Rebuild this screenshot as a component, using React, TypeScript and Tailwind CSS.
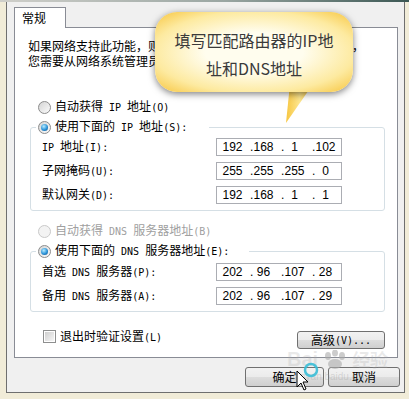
import React from "react";

function Mix({ s }: { s: string }) {
  const parts = s.split(/([\x20-\x7e]+)/).filter((p) => p.length > 0);
  return (
    <>
      {parts.map((p, i) =>
        /^[\x20-\x7e]+$/.test(p) ? (
          <span key={i} className="whitespace-pre font-['DejaVu_Sans_Mono',monospace] text-[10px]">
            {p}
          </span>
        ) : (
          <span key={i}>{p}</span>
        )
      )}
    </>
  );
}

function Radio({ checked = false, disabled = false }: { checked?: boolean; disabled?: boolean }) {
  return (
    <span
      className={`flex h-[13px] w-[13px] shrink-0 items-center justify-center rounded-full border ${
        disabled
          ? "border-[#c9c9c9] bg-[#f3f3f3]"
          : "border-[#8c8c8c] bg-[linear-gradient(135deg,#d4d4d4,#fbfbfb)]"
      }`}
    >
      {checked && (
        <span className="h-[7px] w-[7px] rounded-full bg-[radial-gradient(circle_at_40%_35%,#b8ecff,#2b93d8_55%,#0b477f)]" />
      )}
    </span>
  );
}

function IpField({ v }: { v: string[] }) {
  return (
    <div className="flex h-[18px] w-[126px] items-center overflow-hidden border border-[#abadb3] bg-white font-['Liberation_Sans',sans-serif] text-[12px] text-black">
      {v.map((n, i) => (
        <div key={i} className="relative h-[16px] w-[31px] shrink-0 text-center leading-[16px]">
          {i > 0 && <span className="absolute left-[2px] top-0">.</span>}
          {n}
        </div>
      ))}
    </div>
  );
}

function Row({ label, v }: { label: string; v: string[] }) {
  return (
    <div className="flex h-[18px] items-center">
      <div className="w-[185px] whitespace-nowrap pl-[11px] leading-[14px]">
        <Mix s={label} />
      </div>
      <IpField v={v} />
    </div>
  );
}

function Btn({ children, w }: { children: React.ReactNode; w: string }) {
  return (
    <div
      className={`flex ${w} items-center justify-center rounded-[3px] border border-[#707070] bg-[linear-gradient(#f2f2f2_0%,#ebebeb_50%,#dddddd_51%,#cfcfcf_100%)] text-[12px] text-black`}
    >
      {children}
    </div>
  );
}

export default function App() {
  return (
    <div className="relative h-[399px] w-[409px] overflow-hidden bg-[#f1ecd8] font-['Noto_Sans_CJK_SC',sans-serif] text-[12px] text-black">
      <div className="h-[2px] bg-[linear-gradient(90deg,#cfcfca,#9aa6a2_55%,#3c5854)]" />
      <div className="ml-[6px] h-[391px] w-[399px] border-x border-b border-[#6f6f6f] bg-[#f0f0f0] pl-[7px] pt-[5px]">
        {/* tab */}
        <div className="relative z-10 flex h-[21px] w-[52px] items-center border border-b-0 border-[#898c95] bg-white pl-[7px] leading-[14px]">
          常规
        </div>
        {/* panel */}
        <div className="-mt-px h-[331px] w-[384px] border border-[#898c95] bg-white">
          <div className="pl-[13px] pt-[11px] leading-[13px]">
            <div className="whitespace-nowrap">
              <Mix s="如果网络支持此功能，则可以获取自动指派的 IP 设置。否则，" />
            </div>
            <div className="whitespace-nowrap">
              <Mix s="您需要从网络系统管理员处获得适当的 IP 设置。" />
            </div>
          </div>

          <div className="ml-[23px] mt-[28px] flex h-[20px] items-center gap-[4px] leading-[14px]">
            <Radio />
            <span className="whitespace-nowrap">
              <Mix s="自动获得 IP 地址(O)" />
            </span>
          </div>
          <fieldset className="ml-[15px] w-[355px] rounded-[3px] border border-[#d5dfe5] pb-[6px] pt-[1px]">
            <legend className="ml-[5px] flex h-[20px] items-center gap-[4px] pl-[2px] pr-[22px] leading-[14px]">
              <Radio checked />
              <span className="whitespace-nowrap">
                <Mix s="使用下面的 IP 地址(S):" />
              </span>
            </legend>
            <div className="flex flex-col gap-[6px]">
              <Row label="IP 地址(I):" v={["192", "168", "1", "102"]} />
              <Row label="子网掩码(U):" v={["255", "255", "255", "0"]} />
              <Row label="默认网关(D):" v={["192", "168", "1", "1"]} />
            </div>
          </fieldset>

          <div className="ml-[23px] mt-[10px] flex h-[20px] items-center gap-[4px] leading-[14px] text-[#a0a0a0]">
            <Radio disabled />
            <span className="whitespace-nowrap">
              <Mix s="自动获得 DNS 服务器地址(B)" />
            </span>
          </div>
          <fieldset className="ml-[15px] w-[355px] rounded-[3px] border border-[#d5dfe5] pb-[6px] pt-[2px]">
            <legend className="ml-[5px] flex h-[20px] items-center gap-[4px] pl-[2px] pr-[20px] leading-[14px]">
              <Radio checked />
              <span className="whitespace-nowrap">
                <Mix s="使用下面的 DNS 服务器地址(E):" />
              </span>
            </legend>
            <div className="flex flex-col gap-[6px]">
              <Row label="首选 DNS 服务器(P):" v={["202", "96", "107", "28"]} />
              <Row label="备用 DNS 服务器(A):" v={["202", "96", "107", "29"]} />
            </div>
          </fieldset>

          <div className="ml-[28px] mt-[18px] flex w-[342px] items-start justify-between">
            <div className="flex h-[13px] items-center gap-[4px] leading-[14px]">
              <span className="flex h-[13px] w-[13px] items-center justify-center border border-[#8e8f8f] bg-white">
                <span className="h-[9px] w-[9px] bg-[linear-gradient(135deg,#cfcfcf,#f6f6f6)]" />
              </span>
              <span className="whitespace-nowrap">
                <Mix s="退出时验证设置(L)" />
              </span>
            </div>
            <div className="mt-[1px]">
              <Btn w="h-[18px] w-[88px]">
                <Mix s="高级(V)..." />
              </Btn>
            </div>
          </div>
        </div>

        <div className="ml-[231px] mt-[9px] flex gap-[4px]">
          <Btn w="h-[20px] w-[79px]">确定</Btn>
          <Btn w="h-[20px] w-[72px]">取消</Btn>
        </div>
      </div>

      {/* watermark */}
      <div className="pointer-events-none absolute left-[287px] top-[348px] flex items-end font-['Liberation_Sans',sans-serif] text-[20px] font-bold leading-[22px] text-[rgba(170,170,170,0.25)]">
        <span>Bai</span>
        <svg width="30" height="20" viewBox="0 0 30 20" className="mx-[2px]">
          <g fill="rgba(170,170,170,0.6)">
            <ellipse cx="8" cy="6" rx="3" ry="4" />
            <ellipse cx="15" cy="3" rx="3" ry="3.5" />
            <ellipse cx="22" cy="6" rx="3" ry="4" />
            <ellipse cx="15" cy="14" rx="7" ry="5" />
          </g>
        </svg>
        <span className="font-['Noto_Sans_CJK_SC',sans-serif] text-[18px]">经验</span>
      </div>
      <div className="pointer-events-none absolute left-[290px] top-[372px] font-['Liberation_Sans',sans-serif] text-[10px] leading-[10px] text-[rgba(150,150,150,0.3)]">
        jingyan.baidu.com
      </div>

      {/* cursor */}
      <svg className="pointer-events-none absolute left-[295px] top-[361px]" width="26" height="30" viewBox="0 0 26 30">
        <circle cx="16" cy="9" r="6" fill="none" stroke="#38bcd6" strokeWidth="2.5" opacity="0.9" />
        <path d="M2 10 L2 26 L6 22 L9 29 L11 28 L8 21 L13 21 Z" fill="#fff" stroke="#000" strokeWidth="1" strokeLinejoin="round" />
      </svg>

      {/* callout tail */}
      <svg className="absolute left-[282px] top-[80px]" width="36" height="46" viewBox="0 0 36 46">
        <defs>
          <linearGradient id="tg" x1="0" y1="0" x2="1" y2="0">
            <stop offset="0" stopColor="#f7c640" />
            <stop offset="0.5" stopColor="#fde68f" />
            <stop offset="1" stopColor="#f5c23c" />
          </linearGradient>
        </defs>
        <polygon points="8,4 31,4 4,43" fill="url(#tg)" />
      </svg>
      {/* callout box */}
      <div className="absolute left-[155px] top-[12px] h-[80px] w-[198px] rounded-[22px] bg-[radial-gradient(ellipse_at_center,#fffdee_35%,#fdeaa0_72%,#f7c53e_100%)] pt-[14px] text-center font-['Noto_Sans_CJK_SC',sans-serif] text-[16px] leading-[28px] text-[#3a3a3a] shadow-[0_2px_7px_rgba(0,0,0,0.5)]">
        填写匹配路由器的IP地
        <br />
        址和DNS地址
      </div>
    </div>
  );
}
